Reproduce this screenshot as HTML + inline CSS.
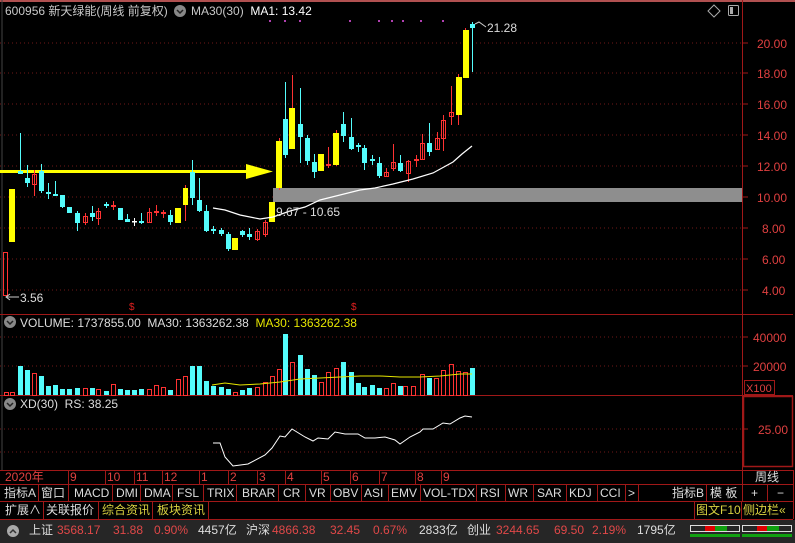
<!DOCTYPE html>
<html><head><meta charset="utf-8"><style>
body{margin:0;width:795px;height:543px;background:#000;overflow:hidden;font-family:"Liberation Sans","Noto Sans CJK SC",sans-serif;font-size:12px;color:#c8c8c8}
svg{position:absolute;left:0;top:0}
.t{position:absolute;white-space:nowrap;line-height:14px}
</style></head><body>
<svg width="795" height="543" xmlns="http://www.w3.org/2000/svg" font-family="Liberation Sans, Noto Sans CJK SC, sans-serif" font-size="12">
<rect x="0" y="0" width="795" height="2" fill="#b05050"/>
<line x1="2" y1="0" x2="2" y2="470" stroke="#444"/>
<g stroke="#701818" stroke-dasharray="1,3">
<line x1="0" y1="43" x2="742" y2="43"/><line x1="0" y1="73" x2="742" y2="73"/><line x1="0" y1="104" x2="742" y2="104"/><line x1="0" y1="135" x2="742" y2="135"/><line x1="0" y1="166" x2="742" y2="166"/><line x1="0" y1="197" x2="742" y2="197"/><line x1="0" y1="228" x2="742" y2="228"/><line x1="0" y1="259" x2="742" y2="259"/><line x1="0" y1="290" x2="742" y2="290"/>
<line x1="0" y1="337" x2="742" y2="337"/><line x1="0" y1="366" x2="742" y2="366"/>
<line x1="0" y1="429" x2="742" y2="429"/><line x1="0" y1="452" x2="742" y2="452"/>
</g>
<g fill="#b040b0"><rect x="269" y="20" width="2" height="2"/><rect x="284" y="20" width="2" height="2"/><rect x="299" y="20" width="2" height="2"/><rect x="349" y="20" width="2" height="2"/><rect x="378" y="20" width="2" height="2"/><rect x="391" y="20" width="2" height="2"/><rect x="402" y="20" width="2" height="2"/><rect x="420" y="20" width="2" height="2"/><rect x="442" y="20" width="2" height="2"/></g>
<!-- gray band -->
<rect x="273" y="188" width="469" height="14" fill="#8e8e8e"/>
<!-- yellow line + arrow -->
<rect x="0" y="170" width="248" height="3" fill="#ffff00"/>
<polygon points="246,164 273,171.5 246,179" fill="#ffff00"/>
<!-- wicks -->
<g stroke-width="1">
<g stroke="#54fcfc">
<line x1="20.5" y1="133" x2="20.5" y2="174"/><line x1="27.5" y1="165" x2="27.5" y2="187"/><line x1="41.5" y1="164" x2="41.5" y2="193"/><line x1="48.5" y1="183" x2="48.5" y2="199"/><line x1="55.5" y1="181" x2="55.5" y2="196"/><line x1="62.5" y1="195" x2="62.5" y2="208"/><line x1="77.5" y1="211" x2="77.5" y2="231"/><line x1="92.5" y1="206" x2="92.5" y2="221"/><line x1="106.5" y1="202" x2="106.5" y2="208"/><line x1="127.5" y1="214" x2="127.5" y2="222"/><line x1="141.5" y1="213" x2="141.5" y2="224"/><line x1="170.5" y1="210" x2="170.5" y2="225"/><line x1="192.5" y1="160" x2="192.5" y2="205"/><line x1="199.5" y1="178" x2="199.5" y2="212"/><line x1="206.5" y1="205" x2="206.5" y2="232"/><line x1="213.5" y1="226" x2="213.5" y2="234"/><line x1="221.5" y1="228" x2="221.5" y2="236"/><line x1="228.5" y1="232" x2="228.5" y2="251"/><line x1="242.5" y1="230" x2="242.5" y2="237"/><line x1="249.5" y1="228" x2="249.5" y2="240"/><line x1="285.5" y1="82" x2="285.5" y2="158"/><line x1="300.5" y1="88" x2="300.5" y2="163"/><line x1="307.5" y1="135" x2="307.5" y2="165"/><line x1="314.5" y1="154" x2="314.5" y2="178"/><line x1="343.5" y1="112" x2="343.5" y2="142"/><line x1="351.5" y1="118" x2="351.5" y2="150"/><line x1="358.5" y1="143" x2="358.5" y2="152"/><line x1="364.5" y1="145" x2="364.5" y2="170"/><line x1="372.5" y1="155" x2="372.5" y2="165"/><line x1="379.5" y1="157" x2="379.5" y2="178"/><line x1="400.5" y1="155" x2="400.5" y2="172"/><line x1="429.5" y1="123" x2="429.5" y2="156"/><line x1="472.5" y1="22" x2="472.5" y2="72"/>
</g>
<g stroke="#ff3232">
<line x1="34.5" y1="170" x2="34.5" y2="196"/><line x1="85.5" y1="213" x2="85.5" y2="225"/><line x1="98.5" y1="208" x2="98.5" y2="225"/><line x1="113.5" y1="201" x2="113.5" y2="210"/><line x1="149.5" y1="208" x2="149.5" y2="222"/><line x1="156.5" y1="205" x2="156.5" y2="216"/><line x1="163.5" y1="210" x2="163.5" y2="218"/><line x1="185.5" y1="185" x2="185.5" y2="221"/><line x1="257.5" y1="229" x2="257.5" y2="241"/><line x1="265.5" y1="220" x2="265.5" y2="237"/><line x1="292.5" y1="75" x2="292.5" y2="149"/><line x1="328.5" y1="147" x2="328.5" y2="168"/><line x1="386.5" y1="168" x2="386.5" y2="177"/><line x1="393.5" y1="144" x2="393.5" y2="171"/><line x1="408.5" y1="160" x2="408.5" y2="182"/><line x1="416.5" y1="155" x2="416.5" y2="167"/><line x1="422.5" y1="134" x2="422.5" y2="160"/><line x1="437.5" y1="132" x2="437.5" y2="150"/><line x1="443.5" y1="115" x2="443.5" y2="151"/><line x1="451.5" y1="86" x2="451.5" y2="125"/><line x1="458.5" y1="74" x2="458.5" y2="125"/><line x1="465.5" y1="28" x2="465.5" y2="77"/><line x1="279.5" y1="138" x2="279.5" y2="190"/><line x1="336.5" y1="130" x2="336.5" y2="166"/>
</g>
<line x1="134.5" y1="218" x2="134.5" y2="226" stroke="#fff"/>
</g>
<!-- cyan bodies -->
<g fill="#54fcfc">
<rect x="18" y="171" width="5" height="3"/><rect x="25" y="178" width="5" height="5"/><rect x="39" y="171" width="5" height="20"/><rect x="46" y="192" width="5" height="2"/><rect x="53" y="194" width="5" height="2"/><rect x="60" y="195" width="5" height="12"/><rect x="67" y="207" width="5" height="6"/><rect x="75" y="213" width="5" height="10"/><rect x="90" y="213" width="5" height="4"/><rect x="104" y="204" width="5" height="2"/><rect x="118" y="208" width="5" height="12"/><rect x="125" y="219" width="5" height="3"/><rect x="139" y="221" width="5" height="2"/><rect x="168" y="215" width="5" height="7"/><rect x="190" y="172" width="5" height="26"/><rect x="197" y="200" width="5" height="11"/><rect x="204" y="211" width="5" height="20"/><rect x="211" y="229" width="5" height="2"/><rect x="219" y="230" width="5" height="4"/><rect x="226" y="234" width="5" height="15"/><rect x="240" y="231" width="5" height="4"/><rect x="247" y="234" width="5" height="3"/><rect x="283" y="119" width="5" height="36"/><rect x="298" y="124" width="5" height="13"/><rect x="305" y="138" width="5" height="23"/><rect x="312" y="162" width="5" height="10"/><rect x="341" y="124" width="5" height="12"/><rect x="349" y="137" width="5" height="12"/><rect x="356" y="145" width="5" height="2"/><rect x="362" y="148" width="5" height="15"/><rect x="370" y="159" width="5" height="2"/><rect x="377" y="163" width="5" height="13"/><rect x="398" y="163" width="5" height="8"/><rect x="427" y="143" width="5" height="9"/><rect x="470" y="24" width="5" height="4"/>
</g>
<rect x="132" y="221" width="5" height="1.5" fill="#fff"/>
<!-- yellow bodies -->
<g fill="#ffff00">
<rect x="9" y="189" width="6" height="53"/><rect x="175" y="208" width="6" height="15"/><rect x="183" y="188" width="5" height="17"/><rect x="232" y="238" width="6" height="12"/><rect x="269" y="202" width="6" height="20"/><rect x="276" y="141" width="6" height="47"/><rect x="289" y="108" width="6" height="41"/><rect x="318" y="154" width="6" height="17"/><rect x="333" y="133" width="6" height="32"/><rect x="456" y="77" width="6" height="38"/><rect x="463" y="30" width="6" height="48"/>
</g>
<!-- red hollow bodies -->
<g fill="none" stroke="#ff3232">
<rect x="3.5" y="252.5" width="4" height="43"/><rect x="32.5" y="174.5" width="4" height="10"/><rect x="83.5" y="216.5" width="4" height="6"/><rect x="96.5" y="211.5" width="4" height="7"/><rect x="111.5" y="205.5" width="4" height="1"/><rect x="147.5" y="212.5" width="4" height="10"/><rect x="154.5" y="211.5" width="4" height="1"/><rect x="161.5" y="212.5" width="4" height="1"/><rect x="255.5" y="231.5" width="4" height="8"/><rect x="263.5" y="222.5" width="4" height="12"/><rect x="326.5" y="164.5" width="4" height="1"/><rect x="384.5" y="172.5" width="4" height="4"/><rect x="391.5" y="162.5" width="4" height="6"/><rect x="406.5" y="161.5" width="4" height="12"/><rect x="414.5" y="159.5" width="4" height="1"/><rect x="420.5" y="143.5" width="4" height="16"/><rect x="435.5" y="138.5" width="4" height="11"/><rect x="441.5" y="120.5" width="4" height="18"/><rect x="449.5" y="112.5" width="4" height="4"/>
</g>
<!-- MA line -->
<polyline fill="none" stroke="#fff" stroke-width="1.2" points="213,208 225,210 240,215 260,219 273,217 290,211 305,207 320,200 340,195 360,190 375,188 393,184 413,179 433,173 453,162 462,154 472,146"/>
<!-- annotations -->
<text x="276" y="216" fill="#ddd">9.67 - 10.65</text>
<text x="487" y="32" fill="#ddd">21.28</text>
<polyline points="475,24 479,22 486,27" fill="none" stroke="#ccc"/>
<text x="20" y="302" fill="#ddd">3.56</text>
<line x1="6" y1="297" x2="19" y2="297" stroke="#ccc"/><polyline points="10,294 6,297 10,300" fill="none" stroke="#ccc"/>
<text x="129" y="310" fill="#e02020" font-size="10">$</text><text x="351" y="310" fill="#e02020" font-size="10">$</text>
<!-- right axis -->
<line x1="742.5" y1="0" x2="742.5" y2="470" stroke="#a01818"/>
<g stroke="#a01818"><line x1="742" y1="43" x2="748" y2="43"/><line x1="742" y1="73" x2="748" y2="73"/><line x1="742" y1="104" x2="748" y2="104"/><line x1="742" y1="135" x2="748" y2="135"/><line x1="742" y1="166" x2="748" y2="166"/><line x1="742" y1="197" x2="748" y2="197"/><line x1="742" y1="228" x2="748" y2="228"/><line x1="742" y1="259" x2="748" y2="259"/><line x1="742" y1="290" x2="748" y2="290"/><line x1="742" y1="337" x2="748" y2="337"/><line x1="742" y1="366" x2="748" y2="366"/><line x1="742" y1="429" x2="748" y2="429"/></g>
<g fill="#e04040" font-size="12"><text x="757" y="48">20.00</text><text x="757" y="78">18.00</text><text x="757" y="109">16.00</text><text x="757" y="140">14.00</text><text x="757" y="171">12.00</text><text x="757" y="202">10.00</text><text x="762" y="233">8.00</text><text x="762" y="264">6.00</text><text x="762" y="295">4.00</text><text x="753" y="342">40000</text><text x="753" y="371">20000</text><text x="758" y="434">25.00</text></g>
<rect x="744.5" y="380.5" width="30" height="14" fill="none" stroke="#a01818"/><text x="746" y="392" fill="#e04040" font-size="11">X100</text>
<rect x="743.5" y="396.5" width="49" height="70" fill="none" stroke="#a01818" stroke-width="1.5"/>
<!-- top right icons -->
<polygon points="714,5 720,11 714,17 708,11" fill="none" stroke="#aaa"/>
<rect x="728.5" y="5.5" width="10" height="10" fill="none" stroke="#aaa" rx="1"/><rect x="730" y="7" width="3" height="7" fill="#aaa"/>
<!-- panel separators -->
<line x1="0" y1="314.5" x2="793" y2="314.5" stroke="#a01818"/>
<line x1="0" y1="395.5" x2="793" y2="395.5" stroke="#a01818"/>
<!-- volume bars -->
<g fill="#54fcfc">
<rect x="18" y="366" width="5" height="29"/><rect x="25" y="370" width="5" height="25"/><rect x="39" y="376" width="5" height="19"/><rect x="46" y="386" width="5" height="9"/><rect x="53" y="385" width="5" height="10"/><rect x="60" y="389" width="5" height="6"/><rect x="67" y="389" width="5" height="6"/><rect x="75" y="388" width="5" height="7"/><rect x="90" y="388" width="5" height="7"/><rect x="104" y="391" width="5" height="4"/><rect x="118" y="389" width="5" height="6"/><rect x="125" y="390" width="5" height="5"/><rect x="132" y="390" width="5" height="5"/><rect x="139" y="389" width="5" height="6"/><rect x="168" y="390" width="5" height="5"/><rect x="190" y="366" width="5" height="29"/><rect x="197" y="366" width="5" height="29"/><rect x="204" y="381" width="5" height="14"/><rect x="211" y="386" width="5" height="9"/><rect x="219" y="387" width="5" height="8"/><rect x="226" y="389" width="5" height="6"/><rect x="240" y="390" width="5" height="5"/><rect x="247" y="388" width="5" height="7"/><rect x="283" y="334" width="5" height="61"/><rect x="298" y="355" width="5" height="40"/><rect x="305" y="369" width="5" height="26"/><rect x="312" y="375" width="5" height="20"/><rect x="341" y="362" width="5" height="33"/><rect x="349" y="372" width="5" height="23"/><rect x="356" y="383" width="5" height="12"/><rect x="362" y="387" width="5" height="8"/><rect x="370" y="385" width="5" height="10"/><rect x="377" y="388" width="5" height="7"/><rect x="398" y="386" width="5" height="9"/><rect x="427" y="378" width="5" height="17"/><rect x="470" y="368" width="5" height="27"/>
</g>
<g fill="none" stroke="#ff3232">
<rect x="4.5" y="392.5" width="4" height="3"/><rect x="10.5" y="392.5" width="4" height="3"/><rect x="32.5" y="373.5" width="4" height="22"/><rect x="83.5" y="388.5" width="4" height="7"/><rect x="96.5" y="389.5" width="4" height="6"/><rect x="111.5" y="384.5" width="4" height="11"/><rect x="147.5" y="389.5" width="4" height="6"/><rect x="154.5" y="385.5" width="4" height="10"/><rect x="161.5" y="387.5" width="4" height="8"/><rect x="176.5" y="379.5" width="4" height="16"/><rect x="183.5" y="376.5" width="4" height="19"/><rect x="233.5" y="392.5" width="4" height="3"/><rect x="255.5" y="387.5" width="4" height="8"/><rect x="263.5" y="382.5" width="4" height="13"/><rect x="270.5" y="376.5" width="4" height="19"/><rect x="277.5" y="369.5" width="4" height="26"/><rect x="290.5" y="362.5" width="4" height="33"/><rect x="319.5" y="382.5" width="4" height="13"/><rect x="326.5" y="372.5" width="4" height="23"/><rect x="334.5" y="368.5" width="4" height="27"/><rect x="384.5" y="388.5" width="4" height="7"/><rect x="391.5" y="383.5" width="4" height="12"/><rect x="403.5" y="386.5" width="4" height="9"/><rect x="411.5" y="386.5" width="4" height="9"/><rect x="420.5" y="374.5" width="4" height="21"/><rect x="434.5" y="378.5" width="4" height="17"/><rect x="441.5" y="370.5" width="4" height="25"/><rect x="449.5" y="364.5" width="4" height="31"/><rect x="456.5" y="371.5" width="4" height="24"/><rect x="463.5" y="372.5" width="4" height="23"/>
</g>
<polyline fill="none" stroke="#e6e600" points="212,385 225,383 240,385 260,384 280,382 300,379 320,378 340,377 360,376 380,376 400,377 420,377 440,376 460,374 472,374"/>
<!-- XD line -->
<polyline fill="none" stroke="#fff" points="213,443 220,443 225,457 233,466 248,464 265,455 272,448 280,436 285,437 292,429 305,437 313,441 318,438 328,439 335,432 345,434 358,434 365,438 375,438 385,437 395,440 400,444 410,437 420,432 423,429 433,429 443,423 450,424 460,418 465,416 472,417"/>
<!-- header icons -->
<circle cx="180" cy="11" r="6" fill="#888"/><polyline points="177,10 180,13 183,10" fill="none" stroke="#222" stroke-width="1.5"/>
<circle cx="10" cy="322" r="6" fill="#888"/><polyline points="7,321 10,324 13,321" fill="none" stroke="#222" stroke-width="1.5"/>
<circle cx="10" cy="404" r="6" fill="#888"/><polyline points="7,403 10,406 13,403" fill="none" stroke="#222" stroke-width="1.5"/>
<!-- bottom grids -->
<g stroke="#a01818" fill="none">
<line x1="0" y1="470.5" x2="793" y2="470.5"/><line x1="0" y1="484.5" x2="793" y2="484.5"/><line x1="0" y1="501.5" x2="793" y2="501.5"/><line x1="0" y1="519.5" x2="793" y2="519.5"/>
<line x1="68.5" y1="470" x2="68.5" y2="484"/><line x1="105.5" y1="470" x2="105.5" y2="484"/><line x1="134.5" y1="470" x2="134.5" y2="484"/><line x1="162.5" y1="470" x2="162.5" y2="484"/><line x1="199.5" y1="470" x2="199.5" y2="484"/><line x1="228.5" y1="470" x2="228.5" y2="484"/><line x1="257.5" y1="470" x2="257.5" y2="484"/><line x1="285.5" y1="470" x2="285.5" y2="484"/><line x1="321.5" y1="470" x2="321.5" y2="484"/><line x1="350.5" y1="470" x2="350.5" y2="484"/><line x1="379.5" y1="470" x2="379.5" y2="484"/><line x1="415.5" y1="470" x2="415.5" y2="484"/><line x1="441.5" y1="470" x2="441.5" y2="484"/><line x1="742.5" y1="470" x2="742.5" y2="484"/>
<line x1="38.5" y1="484" x2="38.5" y2="501"/><line x1="68.5" y1="484" x2="68.5" y2="501"/><line x1="112.5" y1="484" x2="112.5" y2="501"/><line x1="140.5" y1="484" x2="140.5" y2="501"/><line x1="172.5" y1="484" x2="172.5" y2="501"/><line x1="203.5" y1="484" x2="203.5" y2="501"/><line x1="236.5" y1="484" x2="236.5" y2="501"/><line x1="278.5" y1="484" x2="278.5" y2="501"/><line x1="305.5" y1="484" x2="305.5" y2="501"/><line x1="330.5" y1="484" x2="330.5" y2="501"/><line x1="361.5" y1="484" x2="361.5" y2="501"/><line x1="388.5" y1="484" x2="388.5" y2="501"/><line x1="420.5" y1="484" x2="420.5" y2="501"/><line x1="476.5" y1="484" x2="476.5" y2="501"/><line x1="505.5" y1="484" x2="505.5" y2="501"/><line x1="533.5" y1="484" x2="533.5" y2="501"/><line x1="566.5" y1="484" x2="566.5" y2="501"/><line x1="597.5" y1="484" x2="597.5" y2="501"/><line x1="625.5" y1="484" x2="625.5" y2="501"/><line x1="638.5" y1="484" x2="638.5" y2="501"/><line x1="706.5" y1="484" x2="706.5" y2="501"/><line x1="742.5" y1="484" x2="742.5" y2="501"/><line x1="767.5" y1="484" x2="767.5" y2="501"/><line x1="793.5" y1="470" x2="793.5" y2="519"/>
<line x1="43.5" y1="501" x2="43.5" y2="519"/><line x1="98.5" y1="501" x2="98.5" y2="519"/><line x1="152.5" y1="501" x2="152.5" y2="519"/><line x1="208.5" y1="501" x2="208.5" y2="519"/><line x1="694.5" y1="501" x2="694.5" y2="519"/><line x1="741.5" y1="501" x2="741.5" y2="519"/>
</g>
<rect x="0" y="520" width="795" height="23" fill="#262626"/>
<circle cx="13" cy="531" r="6" fill="#aaa"/><polyline points="10,533 13,530 16,533" fill="none" stroke="#333" stroke-width="1.5"/>
<g stroke="#ddd" fill="none"><rect x="690.5" y="525.5" width="49" height="6"/><rect x="742.5" y="525.5" width="49" height="6"/></g>
<rect x="705" y="526" width="10" height="5" fill="#e00000"/><rect x="715" y="526" width="12" height="5" fill="#10a010"/>
<rect x="757" y="526" width="10" height="5" fill="#e00000"/><rect x="767" y="526" width="12" height="5" fill="#10a010"/>
<g fill="#10a010"><rect x="690" y="534" width="50" height="3"/><rect x="742" y="534" width="50" height="3"/></g>
</svg>
<div class="t" style="left:5px;top:4px;color:#c8c8c8">600956 新天绿能(周线 前复权)</div>
<div class="t" style="left:191px;top:4px;color:#c8c8c8">MA30(30) <span style="color:#fff">&nbsp;MA1: 13.42</span></div>
<div class="t" style="left:20px;top:316px;color:#ddd">VOLUME: 1737855.00 &nbsp;MA30: 1363262.38 &nbsp;<span style="color:#e6e600">MA30: 1363262.38</span></div>
<div class="t" style="left:20px;top:397px;color:#ddd">XD(30) &nbsp;RS: 38.25</div>
<div class="t" style="left:5px;top:470px;color:#e04040">2020年</div>
<div class="t" style="left:70px;top:470px;color:#e04040">9</div><div class="t" style="left:107px;top:470px;color:#e04040">10</div><div class="t" style="left:136px;top:470px;color:#e04040">11</div><div class="t" style="left:164px;top:470px;color:#e04040">12</div><div class="t" style="left:201px;top:470px;color:#e04040">1</div><div class="t" style="left:230px;top:470px;color:#e04040">2</div><div class="t" style="left:259px;top:470px;color:#e04040">3</div><div class="t" style="left:287px;top:470px;color:#e04040">4</div><div class="t" style="left:323px;top:470px;color:#e04040">5</div><div class="t" style="left:352px;top:470px;color:#e04040">6</div><div class="t" style="left:381px;top:470px;color:#e04040">7</div><div class="t" style="left:417px;top:470px;color:#e04040">8</div><div class="t" style="left:443px;top:470px;color:#e04040">9</div>
<div class="t" style="left:755px;top:470px;color:#ddd">周线</div>
<div class="t" style="left:4px;top:486px;color:#ddd">指标A</div><div class="t" style="left:41px;top:486px;color:#ddd">窗口</div><div class="t" style="left:74px;top:486px;color:#ddd">MACD</div><div class="t" style="left:116px;top:486px;color:#ddd">DMI</div><div class="t" style="left:144px;top:486px;color:#ddd">DMA</div><div class="t" style="left:177px;top:486px;color:#ddd">FSL</div><div class="t" style="left:207px;top:486px;color:#ddd">TRIX</div><div class="t" style="left:242px;top:486px;color:#ddd">BRAR</div><div class="t" style="left:283px;top:486px;color:#ddd">CR</div><div class="t" style="left:309px;top:486px;color:#ddd">VR</div><div class="t" style="left:333px;top:486px;color:#ddd">OBV</div><div class="t" style="left:364px;top:486px;color:#ddd">ASI</div><div class="t" style="left:391px;top:486px;color:#ddd">EMV</div><div class="t" style="left:423px;top:486px;color:#ddd">VOL-TDX</div><div class="t" style="left:480px;top:486px;color:#ddd">RSI</div><div class="t" style="left:508px;top:486px;color:#ddd">WR</div><div class="t" style="left:537px;top:486px;color:#ddd">SAR</div><div class="t" style="left:569px;top:486px;color:#ddd">KDJ</div><div class="t" style="left:600px;top:486px;color:#ddd">CCI</div><div class="t" style="left:628px;top:486px;color:#ddd">&gt;</div><div class="t" style="left:672px;top:486px;color:#ddd">指标B</div><div class="t" style="left:710px;top:486px;color:#ddd">模 板</div><div class="t" style="left:751px;top:486px;color:#ddd">+</div><div class="t" style="left:777px;top:486px;color:#ddd">−</div>
<div class="t" style="left:5px;top:503px;color:#ddd">扩展∧</div><div class="t" style="left:46px;top:503px;color:#ddd">关联报价</div><div class="t" style="left:102px;top:503px;color:#d8d040">综合资讯</div><div class="t" style="left:157px;top:503px;color:#d8d040">板块资讯</div><div class="t" style="left:696px;top:503px;color:#d8d040">图文F10</div><div class="t" style="left:743px;top:503px;color:#d8d040">侧边栏«</div>
<div class="t" style="left:29px;top:523px;color:#ddd">上证</div><div class="t" style="left:57px;top:523px;color:#e04848">3568.17</div><div class="t" style="left:113px;top:523px;color:#e04848">31.88</div><div class="t" style="left:154px;top:523px;color:#e04848">0.90%</div><div class="t" style="left:198px;top:523px;color:#ddd">4457亿</div><div class="t" style="left:246px;top:523px;color:#ddd">沪深</div><div class="t" style="left:272px;top:523px;color:#e04848">4866.38</div><div class="t" style="left:330px;top:523px;color:#e04848">32.45</div><div class="t" style="left:373px;top:523px;color:#e04848">0.67%</div><div class="t" style="left:419px;top:523px;color:#ddd">2833亿</div><div class="t" style="left:467px;top:523px;color:#ddd">创业</div><div class="t" style="left:496px;top:523px;color:#e04848">3244.65</div><div class="t" style="left:554px;top:523px;color:#e04848">69.50</div><div class="t" style="left:592px;top:523px;color:#e04848">2.19%</div><div class="t" style="left:637px;top:523px;color:#ddd">1795亿</div>
</body></html>
